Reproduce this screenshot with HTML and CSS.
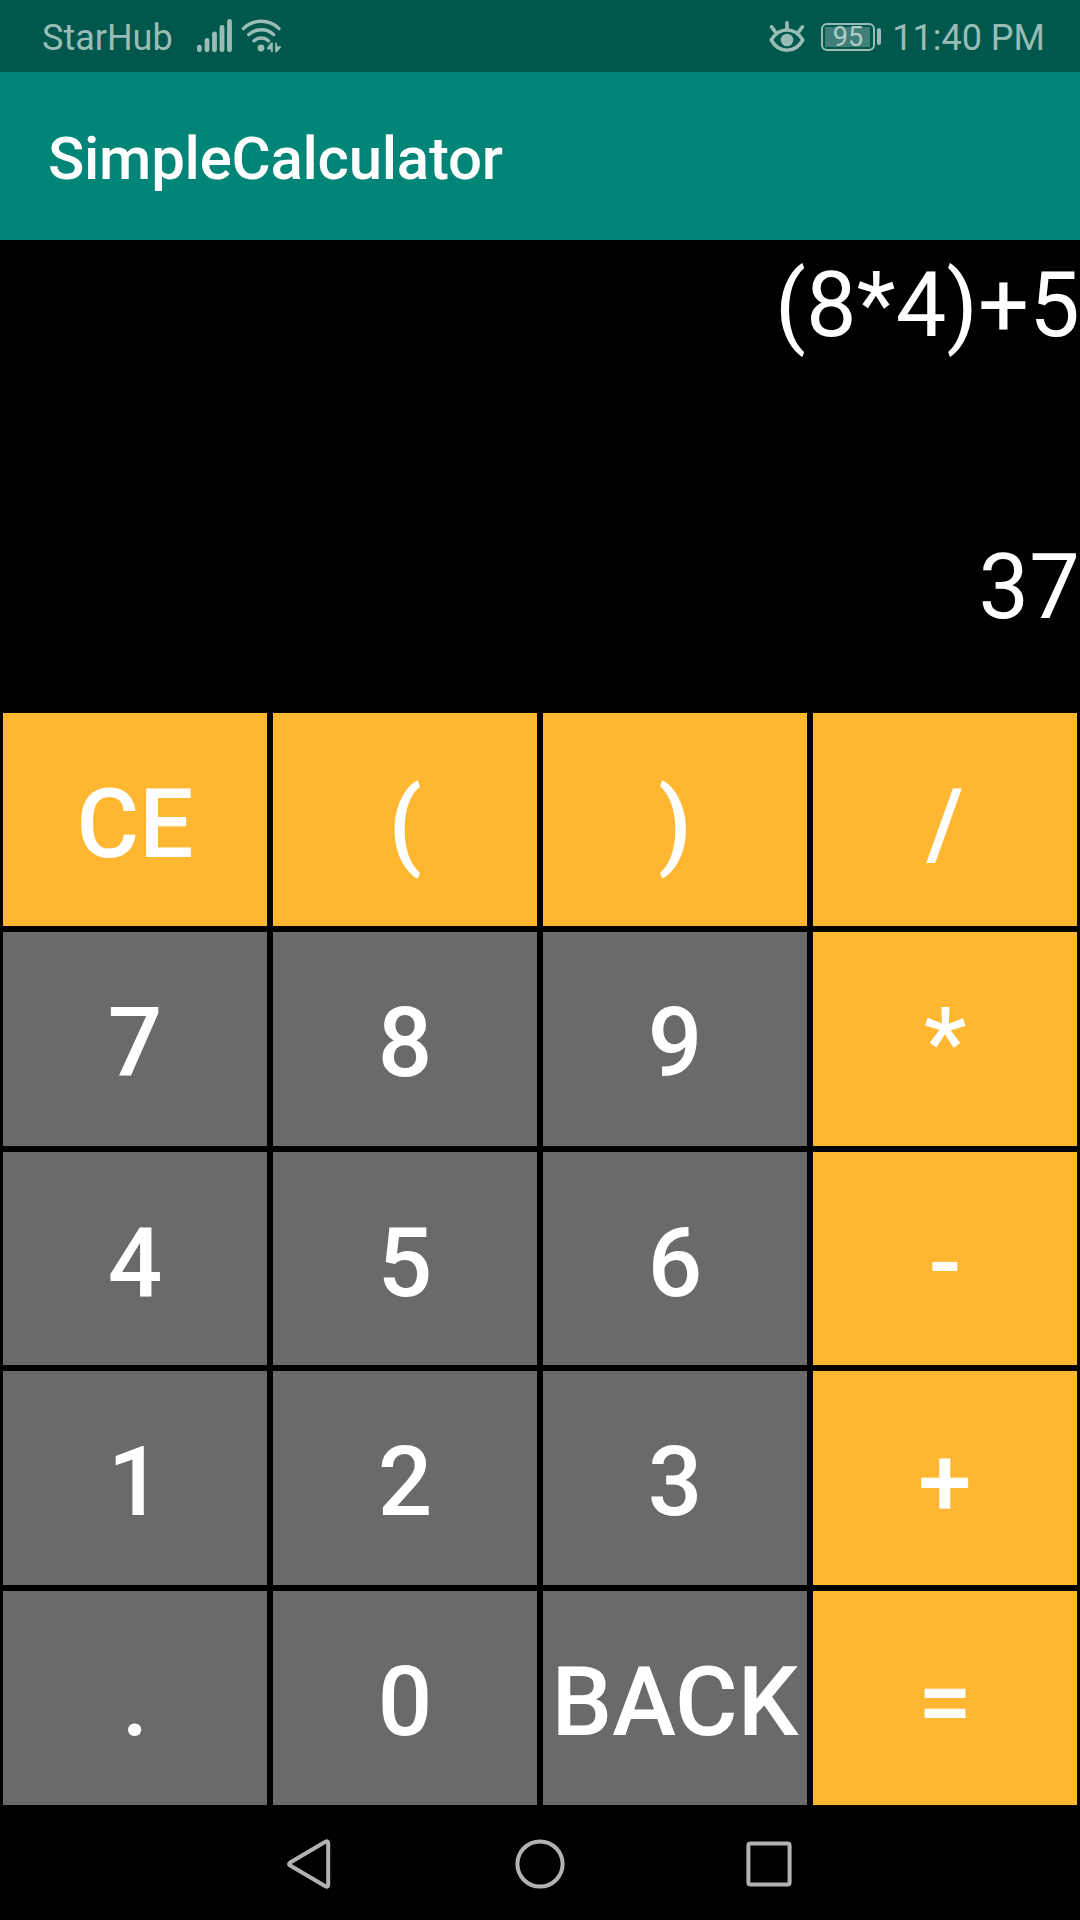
FILE: index.html
```html
<!DOCTYPE html>
<html lang="en">
<head>
<meta charset="utf-8">
<title>SimpleCalculator</title>
<link rel="stylesheet" href="styles.css">
</head>
<body>
<div class="phone">
  <header class="status-bar">
    <span class="carrier">StarHub</span>
    <svg class="network-icons" width="90" height="40" viewBox="194 16 90 40" fill="currentColor">
      <rect x="197" y="44.7" width="4.8" height="7.5" rx="2.4"/>
      <rect x="204.6" y="38" width="4.8" height="14.2" rx="2.4"/>
      <rect x="212.1" y="31.5" width="4.8" height="20.7" rx="2.4"/>
      <rect x="219.6" y="25" width="4.8" height="27.2" rx="2.4"/>
      <rect x="227.1" y="19" width="4.8" height="33.2" rx="2.4"/>
      <g fill="none" stroke="currentColor" stroke-width="3.4" stroke-linecap="round">
        <path d="M243.5 28.6Q251 21.3 261.3 21.3T279 28.6"/>
        <path d="M248.8 34.6Q254 29.7 261.3 29.7T273.6 34.6"/>
        <path d="M254 40.9Q257 38 261.3 38T268.4 40.9"/>
      </g>
      <circle cx="261" cy="48" r="3.4"/>
      <path d="M272.8 42.6V52H270.9V49.6H267.2V47.4L271 42.6ZM275.2 42.8H277V46.3H281V47.3L276.8 52.2H275.2Z"/>
    </svg>
    <svg class="eye-icon" width="40" height="40" viewBox="767 16 40 40" fill="none" stroke="currentColor" stroke-width="3.6" stroke-linecap="round">
      <path d="M771.2 40C775 33.6 780.5 30 787 30S799 33.6 802.8 40C799 46.7 793.5 50.2 787 50.2S775 46.7 771.2 40Z" stroke-linejoin="round"/>
      <path d="M787 22.8V29M771.6 26.8L775 31.3M802.4 26.8L799 31.3"/>
      <circle cx="787" cy="40" r="6.3" fill="currentColor" stroke="none"/>
    </svg>
    <div class="battery"><span class="battery-level">95</span></div>
    <span class="battery-tip"></span>
    <span class="clock">11:40 PM</span>
  </header>
  <div class="app-bar"><h1 class="app-title">SimpleCalculator</h1></div>
  <main class="calculator">
    <div class="expression">(8*4)+5</div>
    <div class="result">37</div>
    <div class="keypad">
      <button class="key operator">CE</button>
      <button class="key operator">(</button>
      <button class="key operator">)</button>
      <button class="key operator">/</button>
      <button class="key">7</button>
      <button class="key">8</button>
      <button class="key">9</button>
      <button class="key operator">*</button>
      <button class="key">4</button>
      <button class="key">5</button>
      <button class="key">6</button>
      <button class="key operator">-</button>
      <button class="key">1</button>
      <button class="key">2</button>
      <button class="key">3</button>
      <button class="key operator">+</button>
      <button class="key">.</button>
      <button class="key">0</button>
      <button class="key">BACK</button>
      <button class="key operator">=</button>
    </div>
  </main>
  <nav class="nav-bar">
    <svg width="60" height="60" viewBox="0 0 60 60"><path d="M9.6 28.2Q6.4 30 9.6 31.8L44.4 52.2Q47.2 53.6 47.2 50.6V9.4Q47.2 6.4 44.4 7.8Z"/></svg>
    <svg width="60" height="60" viewBox="0 0 60 60"><circle cx="30" cy="30" r="22.6"/></svg>
    <svg width="60" height="60" viewBox="0 0 60 60"><rect x="9.4" y="9.4" width="41.2" height="41.2" rx="2"/></svg>
  </nav>
</div>
</body>
</html>
```
FILE: styles.css
```css
* {
  box-sizing: border-box;
}

body {
  margin: 0;
  background: #000;
  font-family: Roboto, "Liberation Sans", sans-serif;
  color: #fff;
}

.phone {
  display: flex;
  flex-direction: column;
  width: 1080px;
  height: 1920px;
  overflow: hidden;
}

.status-bar {
  display: flex;
  align-items: center;
  height: 72px;
  padding: 0 35px 0 42px;
  background: #00574b;
  color: #99bcb7;
  font-size: 36px;
  line-height: 70px;
}

.carrier {
  width: 152px;
  padding-top: 4px;
}

.clock {
  padding-top: 4px;
}

.network-icons {
  margin-right: auto;
}

.battery {
  display: flex;
  width: 54px;
  height: 28px;
  margin: 1px 0 0 14px;
  padding: 2px;
  border: 2px solid currentColor;
  border-radius: 6px;
}

.battery-level {
  width: 45px;
  height: 20px;
  padding-left: 8px;
  background: #3f7f76;
  color: #b2cdc9;
  font-size: 27px;
  line-height: 20px;
}

.battery-tip {
  width: 4px;
  height: 17px;
  margin: 0 11px 0 2.5px;
  border-radius: 2px;
  background: currentColor;
}

.app-bar {
  display: flex;
  align-items: center;
  height: 168px;
  padding: 4px 48px 0;
  background: #008577;
}

.app-title {
  margin: 0;
  font-size: 60px;
  font-weight: 500;
  letter-spacing: -0.25px;
}

.calculator {
  display: flex;
  flex-direction: column;
  height: 1568px;
}

.expression,
.result {
  font-size: 90px;
  line-height: 120px;
  letter-spacing: 0.2px;
  text-align: right;
}

.expression {
  height: 282px;
  padding-top: 6px;
}

.result {
  height: 188px;
  padding-top: 6px;
}

.keypad {
  display: grid;
  grid-template-columns: repeat(4, 264px);
  grid-template-rows: 213px 214px 213px 214px 214px;
  gap: 6px;
  padding: 3px;
}

.key {
  display: flex;
  align-items: center;
  justify-content: center;
  margin: 0;
  padding: 8px 0 0;
  border: 0;
  border-radius: 0;
  background: #6a6a6a;
  color: #fff;
  font: 500 96px/112px Roboto, "Liberation Sans", sans-serif;
}

.operator {
  background: #ffb732;
}

.nav-bar {
  display: flex;
  align-items: center;
  justify-content: space-between;
  height: 112px;
  padding: 0 281px;
}

.nav-bar svg {
  fill: none;
  stroke: #b2b2b2;
  stroke-width: 4;
}
```
